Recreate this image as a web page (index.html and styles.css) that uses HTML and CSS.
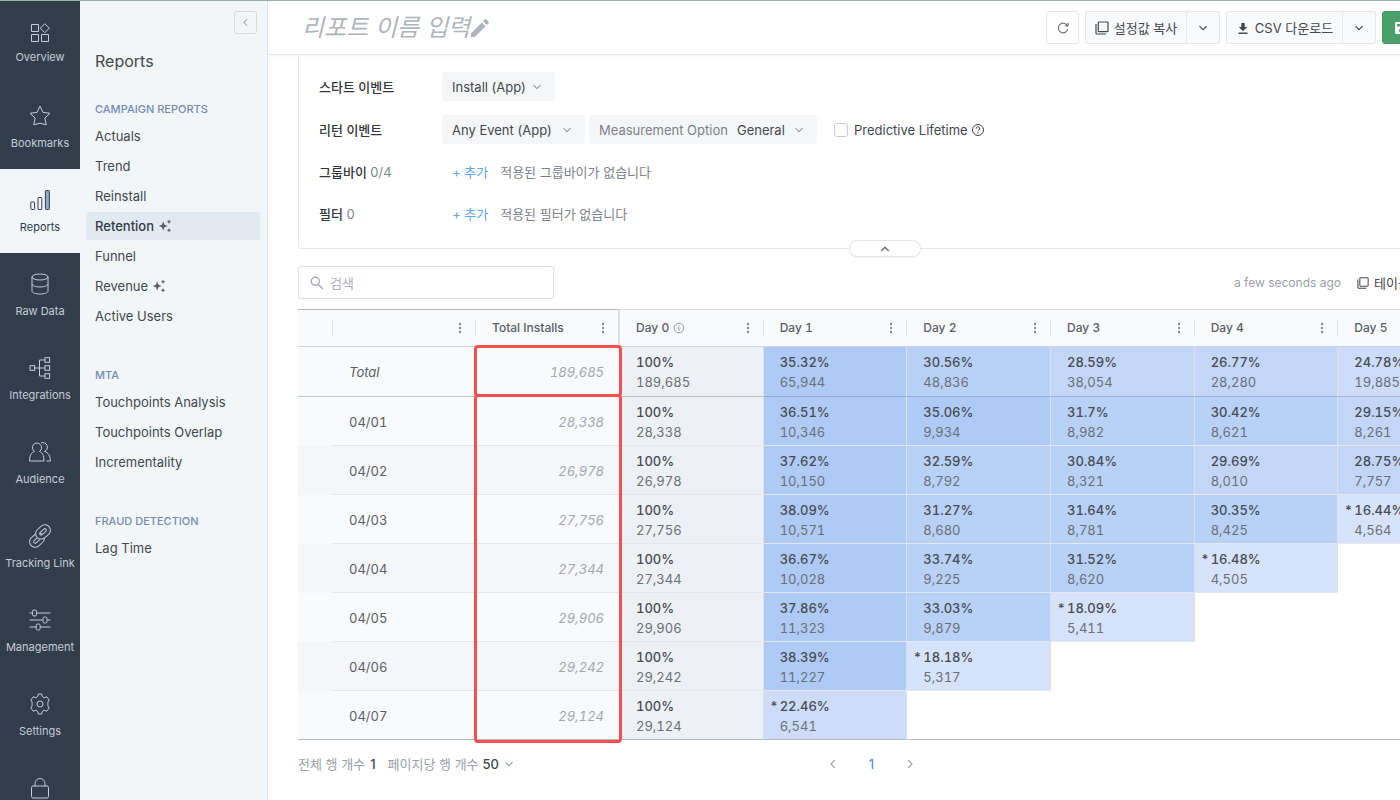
FILE: index.html
```html
<!DOCTYPE html>
<html lang="ko">
<head>
  <meta charset="utf-8">
  <title>Retention Report</title>
  <link rel="stylesheet" href="styles.css">
</head>
<body>
<!-- shared icons -->
<svg class="sprite" aria-hidden="true">
  <symbol id="down" viewBox="0 0 10 10"><path d="M1.5 3.2 5 6.7l3.5-3.5"/></symbol>
  <symbol id="dots" viewBox="0 0 4 12"><circle cx="2" cy="2" r="1.2"/><circle cx="2" cy="6" r="1.2"/><circle cx="2" cy="10" r="1.2"/></symbol>
  <symbol id="copy" viewBox="0 0 14 14"><path d="M4 1h8.300q.7 0 .7.700V10q0 .7-.7.700H4q-.7 0-.7-.700V1.700Q3.300 1 4 1zM1 3v9.300q0 .7.700.7H11"/></symbol>
  <symbol id="spark" viewBox="0 0 14 14"><path d="M5.200 2.600 6.500 5.700 9.600 7 6.500 8.300 5.200 11.400 3.900 8.300.8 7l3.100-1.300zM11 .6l.7 1.500 1.500.7-1.500.7L11 5l-.7-1.500-1.500-.7 1.500-.7zM11 9l.7 1.500 1.500.7-1.500.7-.7 1.500-.7-1.500-1.500-.7 1.500-.7z"/></symbol>
</svg>

<div class="app">
  <nav class="rail">
    <a class="rail-item first" href="#">
      <svg viewBox="0 0 24 24"><path d="M3.500 3.500h7v7h-7zM3.500 13.500h7v7h-7zM13.500 13.500h7v7h-7zM16.800 2.700l4.500 4.500-4.500 4.500-4.500-4.500z"/></svg>
      <span>Overview</span>
    </a>
    <a class="rail-item" href="#">
      <svg viewBox="0 0 24 24"><path d="M12 2.200l3 6.200 7 .9-5.100 4.700 1.300 6.800-6.200-1.600-6.200 1.600 1.300-6.800L2 9.300l7-.9z"/></svg>
      <span>Bookmarks</span>
    </a>
    <a class="rail-item active" href="#">
      <svg viewBox="0 0 24 24"><rect x="2.800" y="14" width="3.800" height="7.500" rx=".8"/><rect x="10" y="9.500" width="3.800" height="12" rx=".8"/><rect class="solid" x="17.400" y="2.500" width="4" height="19" rx=".8"/></svg>
      <span>Reports</span>
    </a>
    <a class="rail-item" href="#">
      <svg viewBox="0 0 24 24"><ellipse cx="12" cy="5" rx="8" ry="3"/><path d="M4 5v14c0 1.600 3.600 3 8 3s8-1.400 8-3V5M4 12c0 1.600 3.600 3 8 3s8-1.400 8-3"/></svg>
      <span>Raw Data</span>
    </a>
    <a class="rail-item" href="#">
      <svg viewBox="0 0 24 24"><rect x="2" y="9.700" width="4.600" height="4.600"/><rect x="17" y="1.700" width="4.600" height="4.600"/><rect x="17" y="9.700" width="4.600" height="4.600"/><rect x="17" y="17.700" width="4.600" height="4.600"/><path d="M6.600 12H17M17 4h-5.500v16H17"/></svg>
      <span>Integrations</span>
    </a>
    <a class="rail-item" href="#">
      <svg viewBox="0 0 24 24"><path d="M6.500 11.500a4.600 4.600 0 1 1 5 0c2.800.8 4.300 3.800 4.500 9.500H1.500c.2-5.700 2-8.700 5-9.500zM13 2.900a4.600 4.600 0 0 1 3.500 8.600c3.800.8 5.700 4.500 6 9.500H18.500"/></svg>
      <span>Audience</span>
    </a>
    <a class="rail-item" href="#">
      <svg viewBox="0 0 24 24"><g transform="rotate(-42 12 12)">
        <rect class="link-out" x="1" y="9.500" width="12" height="7" rx="3.500"/><rect class="link-in" x="1" y="9.500" width="12" height="7" rx="3.500"/>
        <rect class="link-out" x="11" y="7.500" width="12" height="7" rx="3.500"/><rect class="link-in" x="11" y="7.500" width="12" height="7" rx="3.500"/>
      </g></svg>
      <span>Tracking Link</span>
    </a>
    <a class="rail-item" href="#">
      <svg viewBox="0 0 24 24"><path d="M1.500 5h3M8.500 5h14M1.500 12h13M19.500 12h3M1.500 19h6.500M12.500 19h10"/><rect x="4.500" y="2" width="4" height="6" rx="1.500"/><rect x="15" y="9" width="4" height="6" rx="1.500"/><rect x="8.200" y="16" width="4" height="6" rx="1.500"/></svg>
      <span>Management</span>
    </a>
    <a class="rail-item" href="#">
      <svg viewBox="0 0 24 24"><circle cx="12" cy="12" r="3"/><path d="M10.300 2h3.400l.6 2.600 1.800 1.100 2.700-.9 2.400 3.200-1.300 2.400v3.200l1.300 2.400-2.400 3.200-2.700-.9-1.800 1.100-.6 2.600h-3.400l-.6-2.600-1.800-1.100-2.700.9L2.800 16l1.300-2.400v-3.200L2.800 8l2.400-3.200 2.700.9 1.800-1.100z"/></svg>
      <span>Settings</span>
    </a>
    <a class="rail-item" href="#">
      <svg viewBox="0 0 24 24"><rect x="3.500" y="10" width="17" height="12" rx="1.500"/><path d="M7 10V7.500a5 5 0 0 1 10 0V10"/></svg>
    </a>
  </nav>

  <aside class="side">
    <button class="fold" aria-label="collapse"><svg viewBox="0 0 10 10"><path d="M6.700 1.500 3.200 5l3.500 3.500"/></svg></button>
    <h2>Reports</h2>
    <section>
      <h3>CAMPAIGN REPORTS</h3>
      <a href="#">Actuals</a>
      <a href="#">Trend</a>
      <a href="#">Reinstall</a>
      <a class="on" href="#">Retention <svg class="spark"><use href="#spark"/></svg></a>
      <a href="#">Funnel</a>
      <a href="#">Revenue <svg class="spark"><use href="#spark"/></svg></a>
      <a href="#">Active Users</a>
    </section>
    <section>
      <h3>MTA</h3>
      <a href="#">Touchpoints Analysis</a>
      <a href="#">Touchpoints Overlap</a>
      <a href="#">Incrementality</a>
    </section>
    <section>
      <h3>FRAUD DETECTION</h3>
      <a href="#">Lag Time</a>
    </section>
  </aside>

  <main class="main">
    <header class="top">
      <input class="report-name" type="text" placeholder="리포트 이름 입력" aria-label="리포트 이름 입력">
      <svg class="pencil" viewBox="0 0 20 20"><path d="M1 15.200V19h3.800L15.600 8.200l-3.800-3.800zM18.700 5.100a1 1 0 0 0 0-1.400l-2.400-2.400a1 1 0 0 0-1.400 0l-1.900 1.900 3.800 3.800z"/></svg>
      <div class="actions">
        <button class="btn white" aria-label="refresh"><svg class="i14" viewBox="0 0 14 14"><path d="M11.300 4.700A4.800 4.800 0 1 0 11.800 8M12 1.800v3.200H8.800"/></svg></button>
        <div class="split">
          <button class="btn copy-btn"><svg class="i14"><use href="#copy"/></svg>설정값 복사</button>
          <button class="btn caret" aria-label="more"><svg class="i10"><use href="#down"/></svg></button>
        </div>
        <div class="split">
          <button class="btn csv-btn"><svg class="i14 fill" viewBox="0 0 14 14"><path d="M5.300 2h3.400v4h2.600L7 10.300 2.700 6h2.600zM2.500 11.600h9v1.300h-9z"/></svg>CSV 다운로드</button>
          <button class="btn caret" aria-label="more"><svg class="i10"><use href="#down"/></svg></button>
        </div>
        <button class="btn save"><svg class="i14 fill" viewBox="0 0 14 14"><path fill-rule="evenodd" d="M2 1h8l3 3v8q0 1-1 1H2q-1 0-1-1V2q0-1 1-1zM3 3v2.500h6V3zM7 7.500a2 2 0 1 0 0 4 2 2 0 1 0 0-4z"/></svg>저장</button>
      </div>
    </header>

    <div class="content">
      <section class="filters">
        <div class="row">
          <label class="name" for="start">스타트 이벤트</label>
          <div class="pick start">
            <select id="start"><option>Install (App)</option></select>
            <svg class="i10"><use href="#down"/></svg>
          </div>
        </div>
        <div class="row">
          <label class="name" for="return">리턴 이벤트</label>
          <div class="pick return">
            <select id="return"><option>Any Event (App)</option></select>
            <svg class="i10"><use href="#down"/></svg>
          </div>
          <div class="pick measure">
            <label for="measure">Measurement Option</label>
            <select id="measure"><option>General</option></select>
            <svg class="i10"><use href="#down"/></svg>
          </div>
          <label class="check"><input type="checkbox">Predictive Lifetime
            <svg viewBox="0 0 14 14"><circle cx="7" cy="7" r="5.500"/><path d="M5.200 5.600a1.800 1.800 0 1 1 2.700 1.500q-.9.500-.9 1.200M7 9.400v1.100"/></svg></label>
        </div>
        <div class="row plain">
          <div class="name">그룹바이 <small>0/4</small></div>
          <button class="add">+ 추가</button>
          <span class="none">적용된 그룹바이가 없습니다</span>
        </div>
        <div class="row plain">
          <div class="name">필터 <small>0</small></div>
          <button class="add">+ 추가</button>
          <span class="none">적용된 필터가 없습니다</span>
        </div>
        <button class="handle" aria-label="fold"><svg viewBox="0 0 10 10"><path d="M1.200 7 5 3.200 8.800 7"/></svg></button>
      </section>

      <div class="tools">
        <div class="search">
          <svg viewBox="0 0 14 14"><circle cx="5.300" cy="5.300" r="4"/><path d="M8.400 8.400l4.600 4.600"/></svg>
          <input type="search" placeholder="검색" aria-label="검색">
        </div>
        <span class="ago">a few seconds ago</span>
        <button class="copy-table"><svg><use href="#copy"/></svg>테이블 복사</button>
      </div>

      <div class="table-box">
        <table>
          <colgroup><col class="c-check"><col class="c-date"><col class="c-installs"><col><col><col><col><col><col></colgroup>
          <thead>
            <tr>
              <th class="pin"><div></div></th>
              <th class="pin"><div><span></span><button aria-label="menu"><svg><use href="#dots"/></svg></button></div></th>
              <th class="pin last"><div><span>Total Installs</span><button aria-label="menu"><svg><use href="#dots"/></svg></button></div></th>
              <th><div><span>Day 0 <svg class="info" viewBox="0 0 12 12"><circle cx="6" cy="6" r="4.800"/><path d="M6 5.300v3.200M6 3.400v.9"/></svg></span><button aria-label="menu"><svg><use href="#dots"/></svg></button></div></th>
              <th><div><span>Day 1</span><button aria-label="menu"><svg><use href="#dots"/></svg></button></div></th>
              <th><div><span>Day 2</span><button aria-label="menu"><svg><use href="#dots"/></svg></button></div></th>
              <th><div><span>Day 3</span><button aria-label="menu"><svg><use href="#dots"/></svg></button></div></th>
              <th><div><span>Day 4</span><button aria-label="menu"><svg><use href="#dots"/></svg></button></div></th>
              <th><div><span>Day 5</span></div></th>
            </tr>
          </thead>
          <tbody>
            <tr class="total">
              <td></td><td class="date">Total</td><td class="sum">189,685</td>
              <td class="d0"><b>100%</b>189,685</td>
              <td class="l5"><b>35.32%</b>65,944</td>
              <td class="l4"><b>30.56%</b>48,836</td>
              <td class="l3"><b>28.59%</b>38,054</td>
              <td class="l3"><b>26.77%</b>28,280</td>
              <td class="l2"><b>24.78%</b>19,885</td>
            </tr>
            <tr>
              <td></td><td class="date">04/01</td><td class="sum">28,338</td>
              <td class="d0"><b>100%</b>28,338</td>
              <td class="l5"><b>36.51%</b>10,346</td>
              <td class="l5"><b>35.06%</b>9,934</td>
              <td class="l4"><b>31.7%</b>8,982</td>
              <td class="l4"><b>30.42%</b>8,621</td>
              <td class="l3"><b>29.15%</b>8,261</td>
            </tr>
            <tr>
              <td></td><td class="date">04/02</td><td class="sum">26,978</td>
              <td class="d0"><b>100%</b>26,978</td>
              <td class="l5"><b>37.62%</b>10,150</td>
              <td class="l4"><b>32.59%</b>8,792</td>
              <td class="l4"><b>30.84%</b>8,321</td>
              <td class="l3"><b>29.69%</b>8,010</td>
              <td class="l3"><b>28.75%</b>7,757</td>
            </tr>
            <tr>
              <td></td><td class="date">04/03</td><td class="sum">27,756</td>
              <td class="d0"><b>100%</b>27,756</td>
              <td class="l5"><b>38.09%</b>10,571</td>
              <td class="l4"><b>31.27%</b>8,680</td>
              <td class="l4"><b>31.64%</b>8,781</td>
              <td class="l4"><b>30.35%</b>8,425</td>
              <td class="l1"><b><i>*</i>16.44%</b>4,564</td>
            </tr>
            <tr>
              <td></td><td class="date">04/04</td><td class="sum">27,344</td>
              <td class="d0"><b>100%</b>27,344</td>
              <td class="l5"><b>36.67%</b>10,028</td>
              <td class="l4"><b>33.74%</b>9,225</td>
              <td class="l4"><b>31.52%</b>8,620</td>
              <td class="l1"><b><i>*</i>16.48%</b>4,505</td>
              <td class="empty"></td>
            </tr>
            <tr>
              <td></td><td class="date">04/05</td><td class="sum">29,906</td>
              <td class="d0"><b>100%</b>29,906</td>
              <td class="l5"><b>37.86%</b>11,323</td>
              <td class="l4"><b>33.03%</b>9,879</td>
              <td class="l1"><b><i>*</i>18.09%</b>5,411</td>
              <td class="empty"></td><td class="empty"></td>
            </tr>
            <tr>
              <td></td><td class="date">04/06</td><td class="sum">29,242</td>
              <td class="d0"><b>100%</b>29,242</td>
              <td class="l5"><b>38.39%</b>11,227</td>
              <td class="l1"><b><i>*</i>18.18%</b>5,317</td>
              <td class="empty"></td><td class="empty"></td><td class="empty"></td>
            </tr>
            <tr>
              <td></td><td class="date">04/07</td><td class="sum">29,124</td>
              <td class="d0"><b>100%</b>29,124</td>
              <td class="l2"><b><i>*</i>22.46%</b>6,541</td>
              <td class="empty"></td><td class="empty"></td><td class="empty"></td><td class="empty"></td>
            </tr>
          </tbody>
        </table>
        <div class="mark mark-total"></div>
        <div class="mark mark-days"></div>
      </div>

      <footer class="foot">
        <div class="counts">
          <span>전체 행 개수</span><strong>1</strong>
          <label for="size">페이지당 행 개수</label>
          <select id="size"><option>50</option></select>
          <svg class="i10"><use href="#down"/></svg>
        </div>
        <div class="pages">
          <button aria-label="prev"><svg viewBox="0 0 10 10"><path d="M7 1 3 5l4 4"/></svg></button>
          <a href="#">1</a>
          <button aria-label="next"><svg viewBox="0 0 10 10"><path d="M3 1l4 4-4 4"/></svg></button>
        </div>
      </footer>
    </div>
  </main>
</div>
</body>
</html>
```
FILE: styles.css
```css
* {
  box-sizing: border-box;
}
body {
  margin: 0;
  font-family: Inter, "Noto Sans CJK KR", sans-serif;
  font-size: 13px;
  line-height: 20px;
  color: #43484e;
  background: #fff;
  overflow: hidden;
}
a {
  color: inherit;
  text-decoration: none;
}
button, input, select {
  font: inherit;
  color: inherit;
  margin: 0;
  padding: 0;
  border: none;
  background: none;
  outline: 0;
}
select {
  appearance: none;
}
svg {
  fill: none;
  stroke: currentColor;
  flex: none;
}
.sprite {
  display: none;
}
.i10 {
  width: 10px;
  height: 10px;
  stroke-width: 1.2;
}
.i14 {
  width: 14px;
  height: 14px;
  stroke-width: 1.2;
}
.i14.fill {
  fill: currentColor;
  stroke: none;
}

.app {
  display: flex;
  min-width: 1501px;
  height: 100vh;
  border-top: 1px solid #93b3a5;
}

/* left rail */
.rail {
  flex: none;
  width: 80px;
  background: #323d4b;
  color: #c3ccd8;
  overflow: hidden;
}
.rail-item {
  display: flex;
  flex-direction: column;
  align-items: center;
  gap: 7px;
  height: 84px;
  padding-top: 19px;
  font-size: 11px;
  line-height: 16px;
}
.rail-item.first {
  gap: 4px;
  padding-top: 20px;
}
.rail-item svg {
  width: 24px;
  height: 24px;
}
.rail-item.active {
  background: #f2f6f9;
  color: #2f3b4b;
}
.solid {
  fill: #9aa8c8;
}
.link-out {
  stroke-width: 5;
}
.link-in {
  stroke: #323d4b;
  stroke-width: 3;
}

/* report list */
.side {
  flex: none;
  width: 188px;
  background: #f2f6f9;
  border-right: 1px solid #e4e8ed;
  padding: 10px 7px 0 6px;
}
.fold {
  display: flex;
  align-items: center;
  justify-content: center;
  width: 23px;
  height: 23px;
  margin: 0 3px 0 auto;
  border: 1px solid #d6dade;
  border-radius: 3px;
  color: #6d747c;
}
.fold svg {
  width: 9px;
  height: 9px;
}
.side h2 {
  margin: 15px 9px 28px;
  font-size: 16px;
  line-height: 24px;
  font-weight: 400;
}
.side section {
  display: flex;
  flex-direction: column;
  gap: 2px;
  margin-bottom: 37px;
}
.side h3 {
  margin: 0 9px 3px;
  font-size: 11px;
  line-height: 16px;
  font-weight: 500;
  color: #758bb0;
}
.side section a {
  display: flex;
  align-items: center;
  gap: 4px;
  height: 28px;
  padding: 0 9px;
  border-radius: 3px;
}
.side section a.on {
  background: #e3e9f0;
  color: #323b4b;
  font-weight: 500;
}
.spark {
  width: 14px;
  height: 14px;
  fill: #5a6067;
  stroke: none;
}

/* header */
.main {
  flex: 1;
  min-width: 0;
}
.top {
  display: flex;
  align-items: center;
  height: 54px;
  padding: 0 30px 0 34px;
  border-bottom: 1px solid #e6e8ec;
  box-shadow: 0 1px 2px rgba(50, 60, 75, .06);
}
.report-name {
  width: 172px;
  height: 36px;
  font-size: 24px;
  font-style: italic;
}
.report-name::placeholder {
  color: #b0b4bb;
  font-weight: 400;
  opacity: 1;
}
.pencil {
  width: 20px;
  height: 20px;
  margin-left: -4px;
  fill: #b0b4bb;
  stroke: none;
}
.actions {
  display: flex;
  gap: 6px;
  margin-left: auto;
}
.btn {
  display: flex;
  align-items: center;
  justify-content: center;
  gap: 5px;
  height: 33px;
  border: 1px solid #e4e7eb;
  border-radius: 3px;
  background: #f9fafc;
  white-space: nowrap;
}
.btn.white {
  width: 33px;
  background: #fff;
  color: #6d747c;
}
.split {
  display: flex;
}
.split .btn:first-child {
  border-radius: 3px 0 0 3px;
}
.copy-btn {
  width: 102px;
}
.csv-btn {
  width: 117px;
}
.btn.caret {
  width: 33px;
  border-left: none;
  border-radius: 0 3px 3px 0;
}
.btn.save {
  width: 89px;
  justify-content: flex-start;
  padding-left: 11px;
  border-color: #439a63;
  background: #48a16a;
  color: #fff;
}

/* filters */
.content {
  padding: 0 30px;
}
.filters {
  position: relative;
  display: flex;
  flex-direction: column;
  gap: 14px;
  padding: 17px 20px 20px;
  border: 1px solid #e4e7eb;
  border-top: none;
  border-radius: 0 0 3px 3px;
}
.row {
  display: flex;
  align-items: center;
  height: 29px;
}
.row.plain {
  height: 28px;
}
.name {
  width: 123px;
  font-weight: 500;
  color: #34383d;
}
.name small {
  font-size: 13px;
  font-weight: 400;
  color: #80868d;
}
.pick {
  display: flex;
  align-items: center;
  justify-content: space-between;
  height: 29px;
  padding: 0 13px 0 10px;
  margin-right: 4px;
  border-radius: 3px;
  background: #f5f6f8;
}
.pick svg {
  color: #9da3aa;
}
.start {
  width: 113px;
}
.return {
  width: 143px;
}
.measure {
  width: 228px;
}
.measure label {
  color: #7c8289;
}
.check {
  display: flex;
  align-items: center;
  gap: 3px;
  margin-left: 13px;
}
.check input {
  appearance: none;
  width: 14px;
  height: 14px;
  margin-right: 3px;
  border: 1px solid #c9ced6;
  border-radius: 3px;
  background: #fff;
}
.check svg {
  width: 14px;
  height: 14px;
}
.add {
  margin: 0 12px 0 10px;
  color: #5ba6f5;
}
.none {
  color: #7c8289;
}
.handle {
  position: absolute;
  left: 50%;
  bottom: -9px;
  display: flex;
  align-items: center;
  justify-content: center;
  width: 72px;
  height: 17px;
  margin-left: -36px;
  border: 1px solid #e4e7eb;
  border-radius: 9px;
  background: #fff;
  box-shadow: 0 1px 1px rgba(50, 60, 75, .08);
}
.handle svg {
  width: 10px;
  height: 10px;
  stroke: #6d747c;
  stroke-width: 1.5;
}

/* search row */
.tools {
  display: flex;
  align-items: center;
  margin: 17px 0 10px;
}
.search {
  display: flex;
  align-items: center;
  gap: 6px;
  width: 256px;
  height: 33px;
  padding: 0 11px;
  border: 1px solid #dcdfe5;
  border-radius: 3px;
}
.search svg {
  width: 14px;
  height: 14px;
  stroke: #a4a9b0;
  stroke-width: 1.4;
}
.search input {
  flex: 1;
  min-width: 0;
}
.search input::placeholder {
  color: #aeb3b9;
}
.ago {
  margin-left: auto;
  font-size: 12px;
  color: #9a9fa6;
}
.copy-table {
  display: flex;
  align-items: center;
  gap: 5px;
  width: 114px;
  margin-left: 16px;
  white-space: nowrap;
}
.copy-table svg {
  width: 12px;
  height: 12px;
  stroke-width: 1.2;
}

/* retention table */
.table-box {
  position: relative;
}
table {
  width: 1184px;
  table-layout: fixed;
  border-collapse: separate;
  border-spacing: 0;
  font-variant-numeric: tabular-nums;
}
.c-check {
  width: 35px;
}
.c-date {
  width: 143px;
}
.c-installs {
  width: 144px;
}
th {
  height: 38px;
  padding: 0;
  border-top: 1px solid #d9dce2;
  border-bottom: 1px solid #d0d4da;
  background: #f9fafc;
  font-size: 12px;
  font-weight: 500;
  text-align: left;
  color: #5a6067;
}
th.pin {
  border-top-color: #b4b8be;
}
th div {
  display: flex;
  align-items: center;
  justify-content: space-between;
  height: 18px;
  padding: 0 13px 0 16px;
  border-right: 1px solid #dfe2e7;
}
th span {
  display: flex;
  align-items: center;
  gap: 4px;
}
th.last {
  border-right: 2px solid #dcdfe4;
}
th.last div {
  border: none;
}
th button {
  display: flex;
}
th button svg {
  width: 4px;
  height: 12px;
  fill: #858b92;
  stroke: none;
}
th .info {
  width: 12px;
  height: 12px;
  stroke: #9399a0;
}
td {
  height: 49px;
  padding: 5px 16px 3px;
  border-bottom: 1px solid #e5e7eb;
  background: #f9fafc;
  color: #6a7077;
}
tr:nth-child(odd) td {
  background: #f5f6f8;
}
tr:nth-child(even) td {
  background: #f9fafc;
}
tr.total td {
  height: 50px;
  padding-bottom: 4px;
  background: #f9fafc;
}
tbody td:first-child {
  border-bottom-color: transparent;
}
td b {
  display: block;
  font-weight: 500;
  color: #484d54;
}
td b i {
  display: inline-block;
  width: 10px;
  margin-left: -10px;
  font-style: normal;
}
td.date {
  color: #5a6067;
}
.total td.date {
  font-style: italic;
}
td.sum {
  text-align: right;
  font-style: italic;
  color: #a3a8ae;
}
tbody tr td.d0 {
  background: #edf0f4;
}
tbody tr td.l5 {
  background: #b0caf6;
}
tbody tr td.l4 {
  background: #b9d0f7;
}
tbody tr td.l3 {
  background: #c3d6f8;
}
tbody tr td.l2 {
  background: #cdddf9;
}
tbody tr td.l1 {
  background: #d6e3fa;
}
tbody tr td.empty {
  border-color: transparent;
  background: #fff;
}
.d0, .l5, .l4, .l3, .l2, .l1 {
  border-right: 1px solid #dbe1ea;
}
tbody tr.total td {
  border-bottom-color: rgba(90, 105, 130, .35);
}
tbody tr:last-child td {
  border-bottom-color: #b3bac2;
}

/* highlight frames round the installs column */
.mark {
  position: absolute;
  left: 176px;
  width: 148px;
  border: 3px solid #f5504f;
  border-radius: 4px;
  pointer-events: none;
}
.mark-total {
  top: 36px;
  height: 52px;
}
.mark-days {
  top: 85px;
  bottom: -3px;
}

/* footer */
.foot {
  display: grid;
  grid-template-columns: 1fr auto 1fr;
  padding: 14px 26px 0 0;
}
.counts {
  display: flex;
  align-items: center;
  color: #9a9fa6;
}
.counts strong {
  margin: 0 12px 0 5px;
  font-weight: 500;
  color: #43484e;
}
.counts select {
  margin: 0 4px;
  font-weight: 500;
  color: #43484e;
}
.pages {
  display: flex;
  align-items: center;
  gap: 31px;
}
.pages a {
  color: #3f83ee;
}
.pages button {
  display: flex;
  color: #a4a9b0;
}
.pages svg {
  width: 10px;
  height: 10px;
  stroke-width: 1.2;
}
```
